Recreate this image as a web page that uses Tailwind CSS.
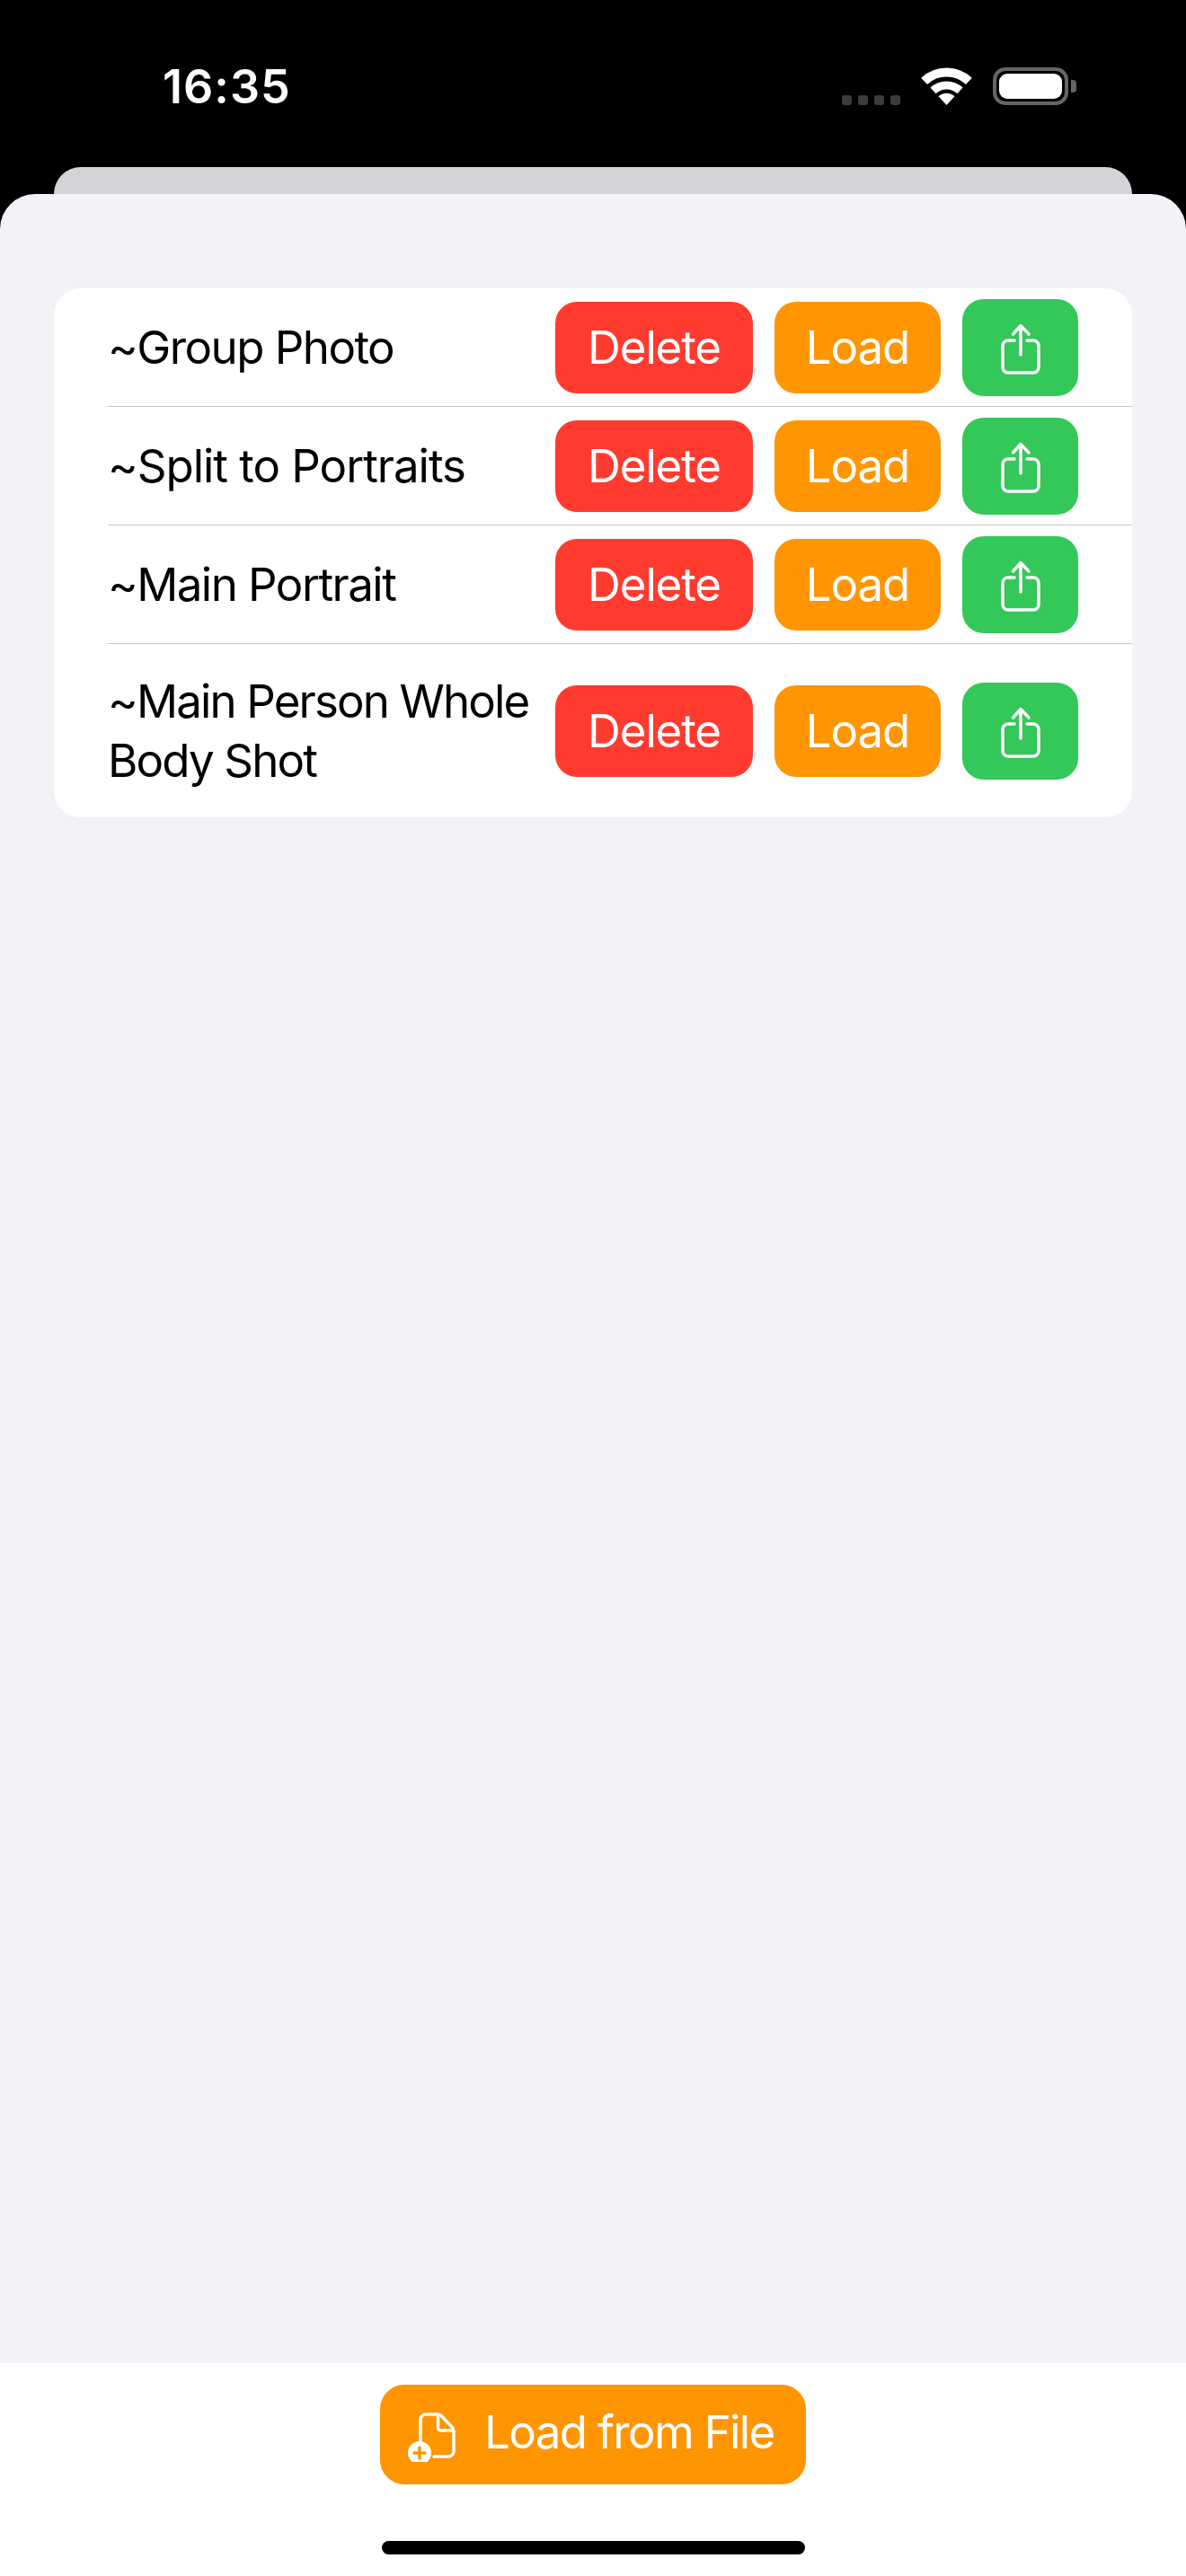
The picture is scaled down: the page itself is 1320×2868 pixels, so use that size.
<!DOCTYPE html>
<html lang="en">
<head>
  <meta charset="UTF-8">
  <title>Saved Layouts</title>
  <script src="https://cdn.jsdelivr.net/npm/@tailwindcss/browser@4"></script>
</head>
<body class="bg-black font-['Inter',sans-serif] text-[51px] leading-[66px] tracking-[-0.022em] text-black">
<div class="w-[1320px] h-[2868px] flex flex-col overflow-hidden">

  <!-- Status bar -->
  <div class="h-[186px] shrink-0 flex items-start text-white">
    <div class="ml-[181px] mt-[64px] font-semibold text-[52px] leading-[66px] tracking-[0.02em]">16:35</div>
    <div class="ml-auto mr-[122px] mt-[75px] h-[42px] flex items-end">
      <div class="flex gap-[7px] mr-[23px]">
        <span class="w-[11px] h-[11px] rounded-[3px] bg-[#3c3c3c]"></span>
        <span class="w-[11px] h-[11px] rounded-[3px] bg-[#3c3c3c]"></span>
        <span class="w-[11px] h-[11px] rounded-[3px] bg-[#3c3c3c]"></span>
        <span class="w-[11px] h-[11px] rounded-[3px] bg-[#3c3c3c]"></span>
      </div>
      <svg width="57" height="42" viewBox="0 0 57 42" fill="none">
        <path d="M3.6 15.3A36.5 36.5 0 0 1 53.4 15.3" stroke="#fff" stroke-width="10"/>
        <path d="M13.5 25.9A22 22 0 0 1 43.5 25.9" stroke="#fff" stroke-width="9"/>
        <path d="M28.5 42L19.5 32.3A13.2 13.2 0 0 1 37.5 32.3Z" fill="#fff"/>
      </svg>
      <div class="ml-[23px] w-[84px] h-[42px] rounded-[14px] border-[4px] border-[#666666] p-[3px]">
        <div class="w-full h-full rounded-[9px] bg-white"></div>
      </div>
      <div class="ml-[3px] mb-[14px] w-[6px] h-[14px] rounded-r-[4px] bg-[#666666]"></div>
    </div>
  </div>

  <!-- Sheet behind -->
  <div class="h-[30px] shrink-0 mx-[60px] rounded-t-[30px] bg-[#d4d4d8]"></div>

  <!-- Sheet -->
  <div class="flex-1 rounded-t-[39px] bg-[#f2f2f7] pt-[105px] px-[60px]">
    <div class="rounded-[30px] bg-white pl-[60px]">

      <div class="h-[132px] pr-[60px] flex items-center border-b border-[#c6c6c8]">
        <div class="flex-1 tracking-[-0.03em]">~Group Photo</div>
        <div class="w-[220px] h-[102px] rounded-[24px] bg-[#ff3b30] text-white flex items-center justify-center">Delete</div>
        <div class="ml-[24px] w-[185px] h-[102px] rounded-[24px] bg-[#ff9500] text-white flex items-center justify-center">Load</div>
        <div class="ml-[24px] w-[129px] h-[108px] rounded-[24px] bg-[#34c759] flex items-center justify-center">
          <svg width="48" height="60" viewBox="0 0 48 60" fill="none" stroke="#fff" stroke-width="3.5" stroke-linecap="round" stroke-linejoin="round">
            <path d="M17 22H10a6 6 0 0 0-6 6V52a6 6 0 0 0 6 6H38a6 6 0 0 0 6-6V28a6 6 0 0 0-6-6H31"/>
            <path d="M24 38V5.5M15.5 15L24 5.5L33 15"/>
          </svg>
        </div>
      </div>

      <div class="h-[132px] pr-[60px] flex items-center border-b border-[#c6c6c8]">
        <div class="flex-1 tracking-[-0.02em]">~Split to Portraits</div>
        <div class="w-[220px] h-[102px] rounded-[24px] bg-[#ff3b30] text-white flex items-center justify-center">Delete</div>
        <div class="ml-[24px] w-[185px] h-[102px] rounded-[24px] bg-[#ff9500] text-white flex items-center justify-center">Load</div>
        <div class="ml-[24px] w-[129px] h-[108px] rounded-[24px] bg-[#34c759] flex items-center justify-center">
          <svg width="48" height="60" viewBox="0 0 48 60" fill="none" stroke="#fff" stroke-width="3.5" stroke-linecap="round" stroke-linejoin="round">
            <path d="M17 22H10a6 6 0 0 0-6 6V52a6 6 0 0 0 6 6H38a6 6 0 0 0 6-6V28a6 6 0 0 0-6-6H31"/>
            <path d="M24 38V5.5M15.5 15L24 5.5L33 15"/>
          </svg>
        </div>
      </div>

      <div class="h-[132px] pr-[60px] flex items-center border-b border-[#c6c6c8]">
        <div class="flex-1 tracking-[-0.03em]">~Main Portrait</div>
        <div class="w-[220px] h-[102px] rounded-[24px] bg-[#ff3b30] text-white flex items-center justify-center">Delete</div>
        <div class="ml-[24px] w-[185px] h-[102px] rounded-[24px] bg-[#ff9500] text-white flex items-center justify-center">Load</div>
        <div class="ml-[24px] w-[129px] h-[108px] rounded-[24px] bg-[#34c759] flex items-center justify-center">
          <svg width="48" height="60" viewBox="0 0 48 60" fill="none" stroke="#fff" stroke-width="3.5" stroke-linecap="round" stroke-linejoin="round">
            <path d="M17 22H10a6 6 0 0 0-6 6V52a6 6 0 0 0 6 6H38a6 6 0 0 0 6-6V28a6 6 0 0 0-6-6H31"/>
            <path d="M24 38V5.5M15.5 15L24 5.5L33 15"/>
          </svg>
        </div>
      </div>

      <div class="h-[193px] pr-[60px] flex items-center">
        <div class="flex-1 tracking-[-0.036em]">~Main Person Whole<br>Body Shot</div>
        <div class="w-[220px] h-[102px] rounded-[24px] bg-[#ff3b30] text-white flex items-center justify-center">Delete</div>
        <div class="ml-[24px] w-[185px] h-[102px] rounded-[24px] bg-[#ff9500] text-white flex items-center justify-center">Load</div>
        <div class="ml-[24px] w-[129px] h-[108px] rounded-[24px] bg-[#34c759] flex items-center justify-center">
          <svg width="48" height="60" viewBox="0 0 48 60" fill="none" stroke="#fff" stroke-width="3.5" stroke-linecap="round" stroke-linejoin="round">
            <path d="M17 22H10a6 6 0 0 0-6 6V52a6 6 0 0 0 6 6H38a6 6 0 0 0 6-6V28a6 6 0 0 0-6-6H31"/>
            <path d="M24 38V5.5M15.5 15L24 5.5L33 15"/>
          </svg>
        </div>
      </div>

    </div>
  </div>

  <!-- Bottom bar -->
  <div class="h-[237px] shrink-0 bg-white flex flex-col items-center">
    <div class="mt-[24px] w-[474px] h-[111px] rounded-[27px] bg-[#ff9500] text-white flex items-center pl-[27px]">
      <svg width="60" height="60" viewBox="0 0 60 60" fill="none" stroke="#fff" stroke-width="3.5" stroke-linecap="round" stroke-linejoin="round">
        <path d="M18 36V13a6 6 0 0 1 6-6H37c2 0 3 .5 4.5 2L53 21c1.5 1.5 2 2.5 2 4.5V48a6 6 0 0 1-6 6H33"/>
        <path d="M37.5 7.5V22a3 3 0 0 0 3 3H54"/>
        <circle cx="17" cy="50" r="13" fill="#fff" stroke="none"/>
        <path d="M17 44V56M11 50H23" stroke="#ff9500"/>
      </svg>
      <span class="ml-[29px] mb-[6px] tracking-[-0.032em]">Load from File</span>
    </div>
    <div class="mt-[63px] w-[471px] h-[15px] rounded-full bg-black"></div>
  </div>

</div>
</body>
</html>
